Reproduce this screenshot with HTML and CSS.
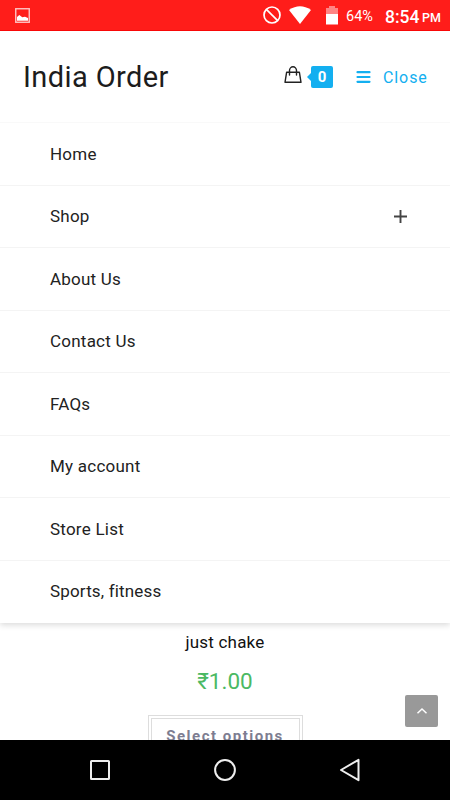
FILE: index.html
```html
<!DOCTYPE html>
<html lang="en">
<head>
<meta charset="utf-8">
<title>India Order</title>
<link rel="stylesheet" href="styles.css">
</head>
<body>
<div class="status">
  <svg class="status-picture" width="15" height="15" viewBox="0 0 15 15"><rect x=".75" y=".75" width="13.5" height="13.5" fill="none" stroke="#ffc4c4" stroke-width="1.4"/><path d="M2 12.700V9l2.300-2 3 2.300 2.700-.5 3 1.200v2.700z" fill="#fff"/></svg>
  <svg class="status-block" width="18" height="18" viewBox="0 0 18 18"><g fill="none" stroke="#fff" stroke-width="1.7"><circle cx="9" cy="9" r="8"/><path d="M3.300 3.300l11.400 11.400"/></g></svg>
  <svg class="status-wifi" width="22" height="18" viewBox="0 0 22 18"><path d="M0 4Q11-3.500 22 4L11 18z" fill="#fff"/></svg>
  <svg class="status-battery" width="12" height="19" viewBox="0 0 12 19"><path d="M3 0h6v2h3v6H0V2h3z" fill="#ff8484"/><path d="M0 8h12v10.500H0z" fill="#fff"/></svg>
  <span class="percent">64%</span>
  <span class="clock">8:54</span><span class="meridiem">PM</span>
</div>
<header class="header">
  <h1 class="brand">India Order</h1>
  <svg class="bag" width="18" height="18" viewBox="0 0 18 18"><g fill="none" stroke="#222" stroke-width="1.400" stroke-linejoin="round" stroke-linecap="round"><path d="M2.600 6.300h12.800l1.600 10H1z"/><path d="M5.500 9V4.500a3.500 3.700 0 0 1 7 0V9"/></g></svg>
  <span class="count">0</span>
  <svg class="bars" width="15" height="12" viewBox="0 0 15 12"><path d="M1.500 1.200h12M1.500 6h12M1.500 10.800h12" stroke="#13aff0" stroke-width="2.200" stroke-linecap="round"/></svg>
  <span class="close">Close</span>
</header>
<nav class="menu">
  <a class="item">Home</a>
  <a class="item">Shop<svg class="plus" width="13" height="13" viewBox="0 0 13 13"><path d="M6.500 0v13M0 6.500h13" stroke="#444" stroke-width="1.900"/></svg></a>
  <a class="item">About Us</a>
  <a class="item">Contact Us</a>
  <a class="item">FAQs</a>
  <a class="item">My account</a>
  <a class="item">Store List</a>
  <a class="item">Sports, fitness</a>
</nav>
<main class="product">
  <div class="name">just chake</div>
  <div class="price">₹1.00</div>
  <div class="options">Select options</div>
</main>
<div class="to-top"><svg width="12" height="8" viewBox="0 0 12 8"><path d="M1.500 6.200L6 2l4.500 4.200" fill="none" stroke="#fff" stroke-width="1.500"/></svg></div>
<div class="navbar">
  <svg width="22" height="22" viewBox="0 0 22 22"><rect x="2" y="2" width="18" height="18" rx=".5" fill="none" stroke="#eee" stroke-width="2"/></svg>
  <svg width="24" height="24" viewBox="0 0 24 24"><circle cx="13" cy="12" r="9.900" fill="none" stroke="#eee" stroke-width="2"/></svg>
  <svg width="24" height="24" viewBox="0 0 24 24"><path d="M21.500 1.800v20.400L4 12z" fill="none" stroke="#eee" stroke-width="2" stroke-linejoin="round"/></svg>
</div>
</body>
</html>
```
FILE: styles.css
```css
* { box-sizing: border-box; }
body {
  margin: 0;
  width: 450px;
  height: 800px;
  overflow: hidden;
  position: relative;
  display: flex;
  flex-direction: column;
  background: #fff;
  color: #222;
  font-family: Roboto, sans-serif;
}
svg { display: block; flex: none; }
.status {
  height: 31px;
  flex: none;
  display: flex;
  align-items: center;
  padding: 0 9px 0 15px;
  background: #ff1d1a;
  border-bottom: 1px solid #f80808;
  color: #fff;
  white-space: nowrap;
}
.status-block { margin-left: auto; }
.status-wifi { margin-left: 8px; }
.status-battery { margin-left: 15px; }
.percent { width: 39px; margin-left: 8px; font-size: 14.5px; line-height: 30px; padding-top: 3px; }
.clock { width: 37px; font-size: 17.5px; font-weight: 500; line-height: 30px; padding-top: 3px; }
.meridiem { width: 19px; font-size: 12.5px; font-weight: 500; line-height: 30px; padding-top: 5px; }
.header {
  height: 92px;
  flex: none;
  display: flex;
  align-items: center;
  padding: 0 23px;
  border-bottom: 1px solid #f9f9f9;
}
.brand {
  margin: 0;
  font-size: 29px;
  font-weight: 400;
  letter-spacing: 0.4px;
  color: #1c1c1c;
}
.bag { margin: -3px 0 0 auto; }
.count {
  position: relative;
  width: 22px;
  height: 22px;
  margin: 1px 23px 0 9px;
  border-radius: 2px;
  background: #13aff0;
  color: #fff;
  font-size: 15px;
  font-weight: 700;
  line-height: 22px;
  text-align: center;
}
.count::before {
  content: "";
  position: absolute;
  left: -4px;
  top: 7px;
  border: solid transparent;
  border-width: 4px 4px 4px 0;
  border-right-color: #13aff0;
}
.close {
  width: 44px;
  margin: 1px 0 0 12px;
  color: #13aff0;
  font-size: 16px;
  letter-spacing: 0.9px;
}
.menu {
  position: relative;
  z-index: 1;
  height: 500px;
  flex: none;
  display: grid;
  grid-template-rows: repeat(8, 1fr);
  background: #fff;
  box-shadow: 0 2px 6px rgba(0, 0, 0, .15);
  clip-path: inset(0 0 -12px);
}
.item {
  display: flex;
  align-items: center;
  justify-content: space-between;
  padding: 0 43px 0 50px;
  border-bottom: 1px solid #f4f4f4;
  font-size: 17px;
  letter-spacing: 0.23px;
}
.item:last-child { padding-bottom: 1px; border-bottom: 0; letter-spacing: 0.16px; }
.product {
  height: 117px;
  flex: none;
  overflow: hidden;
  display: flex;
  flex-direction: column;
  align-items: center;
}
.name { margin-top: 9px; font-size: 17px; line-height: 20px; letter-spacing: 0.2px; color: #111; }
.price { margin-top: 14px; font-size: 22.5px; line-height: 30px; color: #4bb963; }
.options {
  width: 155px;
  height: 44px;
  flex: none;
  margin-top: 19px;
  border: 4px double #ddd;
  color: #7d7d91;
  font-size: 15px;
  font-weight: 700;
  letter-spacing: 1.5px;
  line-height: 34px;
  text-align: center;
  white-space: nowrap;
}
.to-top {
  position: absolute;
  left: 405px;
  top: 695px;
  width: 33px;
  height: 32px;
  display: grid;
  place-items: center;
  border-radius: 2px;
  background: #999;
}
.navbar {
  height: 60px;
  flex: none;
  display: flex;
  align-items: center;
  justify-content: space-between;
  padding: 0 89px;
  background: #000;
}
```
